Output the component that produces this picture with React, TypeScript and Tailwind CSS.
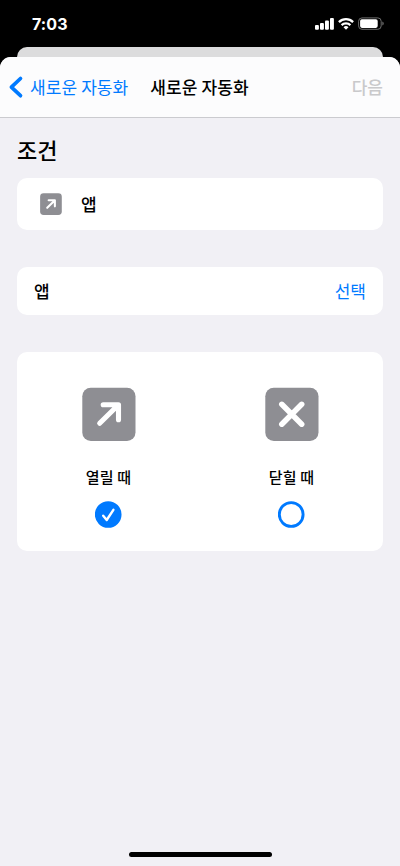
import { useState } from 'react';

function StatusBar() {
  return (
    <div className="flex h-[47px] items-start justify-between pl-8 pr-[16px]">
      <span className="mt-[12px] font-['Inter','Liberation_Sans',sans-serif] text-[16px] font-bold leading-6 tracking-[0.1px] text-white">
        7:03
      </span>
      <div className="mt-[17px] flex items-start">
        <svg width="19" height="13" viewBox="0 0 19 13" fill="white">
          <rect x="0" y="8" width="3.9" height="4.7" rx="1" />
          <rect x="5" y="6" width="3.9" height="6.7" rx="1" />
          <rect x="10" y="3.5" width="3.9" height="9.2" rx="1" />
          <rect x="15" y="1" width="3.9" height="11.7" rx="1" />
        </svg>
        <svg className="ml-1" width="16" height="13" viewBox="0 0 16 13" fill="none" stroke="white" strokeWidth="2.3">
          <path d="M0.9 5.1a10.2 10.2 0 0 1 14.2 0" />
          <path d="M3.6 8.1a6.3 6.3 0 0 1 8.8 0" />
          <path d="M8 12.7 5.5 10.2a3.5 3.5 0 0 1 5 0Z" fill="white" stroke="none" />
        </svg>
        <svg className="ml-[4px]" width="26" height="13" viewBox="0 0 26 13">
          <rect x="0.6" y="0.9" width="22.6" height="11.4" rx="3.4" fill="none" stroke="#6d6d6d" />
          <rect x="2.1" y="2.3" width="17.6" height="8.6" rx="1.8" fill="white" />
          <path d="M24.4 4.6v4a2.2 2.2 0 0 0 0-4Z" fill="#7a7a7a" />
        </svg>
      </div>
    </div>
  );
}

function NavBar() {
  return (
    <header className="flex h-[61px] items-center rounded-t-[11px] border-b border-[#cbcbcf] bg-[#fcfcfd] pl-2 pr-[17px] text-[17px] font-medium">
      <button className="flex items-center font-normal text-[#007aff]">
        <svg width="16" height="24" viewBox="0 0 16 24" fill="none">
          <path d="M12.5 3.5 3.4 12.2l9.1 8.5" stroke="currentColor" strokeWidth="3.7" strokeLinecap="round" strokeLinejoin="round" />
        </svg>
        <span className="ml-[6px] whitespace-nowrap tracking-[0.1px]">새로운 자동화</span>
      </button>
      <h1 className="ml-[22px] whitespace-nowrap tracking-[0.1px]">새로운 자동화</h1>
      <button className="ml-auto text-[#c9c9cb]">다음</button>
    </header>
  );
}

function ArrowTile({ size }: { size: number }) {
  return (
    <svg width={size} height={size} viewBox="0 0 54 54" fill="none">
      <rect x="0.3" y="0.7" width="53.2" height="53.2" rx="8.5" fill="#8e8e93" />
      <path d="M17.7 36.3 36 18.2M21.2 17.8h15.3v15" stroke="white" strokeWidth="5.1" strokeLinecap="round" strokeLinejoin="round" />
    </svg>
  );
}

function CloseTile({ size }: { size: number }) {
  return (
    <svg width={size} height={size} viewBox="0 0 54 54" fill="none">
      <rect x="0.3" y="0.7" width="53.2" height="53.2" rx="8.5" fill="#8e8e93" />
      <path d="m16.8 17.3 19.9 19.9M36.7 17.3 16.8 37.2" stroke="white" strokeWidth="5.5" strokeLinecap="round" />
    </svg>
  );
}

function RadioMark({ checked }: { checked: boolean }) {
  return (
    <svg width="27" height="27" viewBox="0 0 27 27" fill="none">
      <circle cx="13.2" cy="13.5" r="11.9" stroke="#007aff" strokeWidth="2.9" fill={checked ? '#007aff' : 'none'} />
      {checked && (
        <path d="m8.2 14.7 3.5 4.3 6.7-10.2" stroke="white" strokeWidth="2.4" strokeLinecap="round" strokeLinejoin="round" />
      )}
    </svg>
  );
}

const options = [
  { id: 'open', label: '열릴 때', Icon: ArrowTile },
  { id: 'close', label: '닫힐 때', Icon: CloseTile },
];

export default function App() {
  const [selected, setSelected] = useState('open');

  return (
    <div className="flex h-[866px] w-[400px] flex-col overflow-hidden bg-black font-['Noto_Sans_CJK_KR',sans-serif] text-black">
      <StatusBar />
      <div className="mx-[17px] h-[21px] shrink-0 rounded-t-[10px] bg-[#dcdcdd]" />
      <div className="-mt-[11px] flex flex-1 flex-col rounded-t-[11px] bg-[#f1f0f5]">
        <NavBar />
        <main className="flex-1 px-[17px]">
          <h2 className="mt-[14px] h-[46px] text-[22px] font-medium leading-[34px]">조건</h2>
          <section className="flex h-[52px] items-center rounded-[10px] bg-white pl-[23px] text-[17px] font-medium">
            <ArrowTile size={22} />
            <span className="mb-px ml-[19px]">앱</span>
          </section>
          <section className="mt-[37px] flex h-12 items-center justify-between rounded-[10px] bg-white px-[17px] text-[17px]">
            <span className="font-medium">앱</span>
            <button className="text-[#007aff]">선택</button>
          </section>
          <section className="mt-[37px] grid h-[199px] grid-cols-2 rounded-[10px] bg-white pt-[35px]">
            {options.map(({ id, label, Icon }) => (
              <button key={id} onClick={() => setSelected(id)} className="flex flex-col items-center">
                <Icon size={54} />
                <span className="mt-[24px] text-[15px] font-medium leading-6 tracking-[0.2px]">{label}</span>
                <span className="mt-3">
                  <RadioMark checked={selected === id} />
                </span>
              </button>
            ))}
          </section>
        </main>
        <div className="mx-auto mb-[9px] h-[5px] w-[143px] rounded-full bg-black" />
      </div>
    </div>
  );
}
